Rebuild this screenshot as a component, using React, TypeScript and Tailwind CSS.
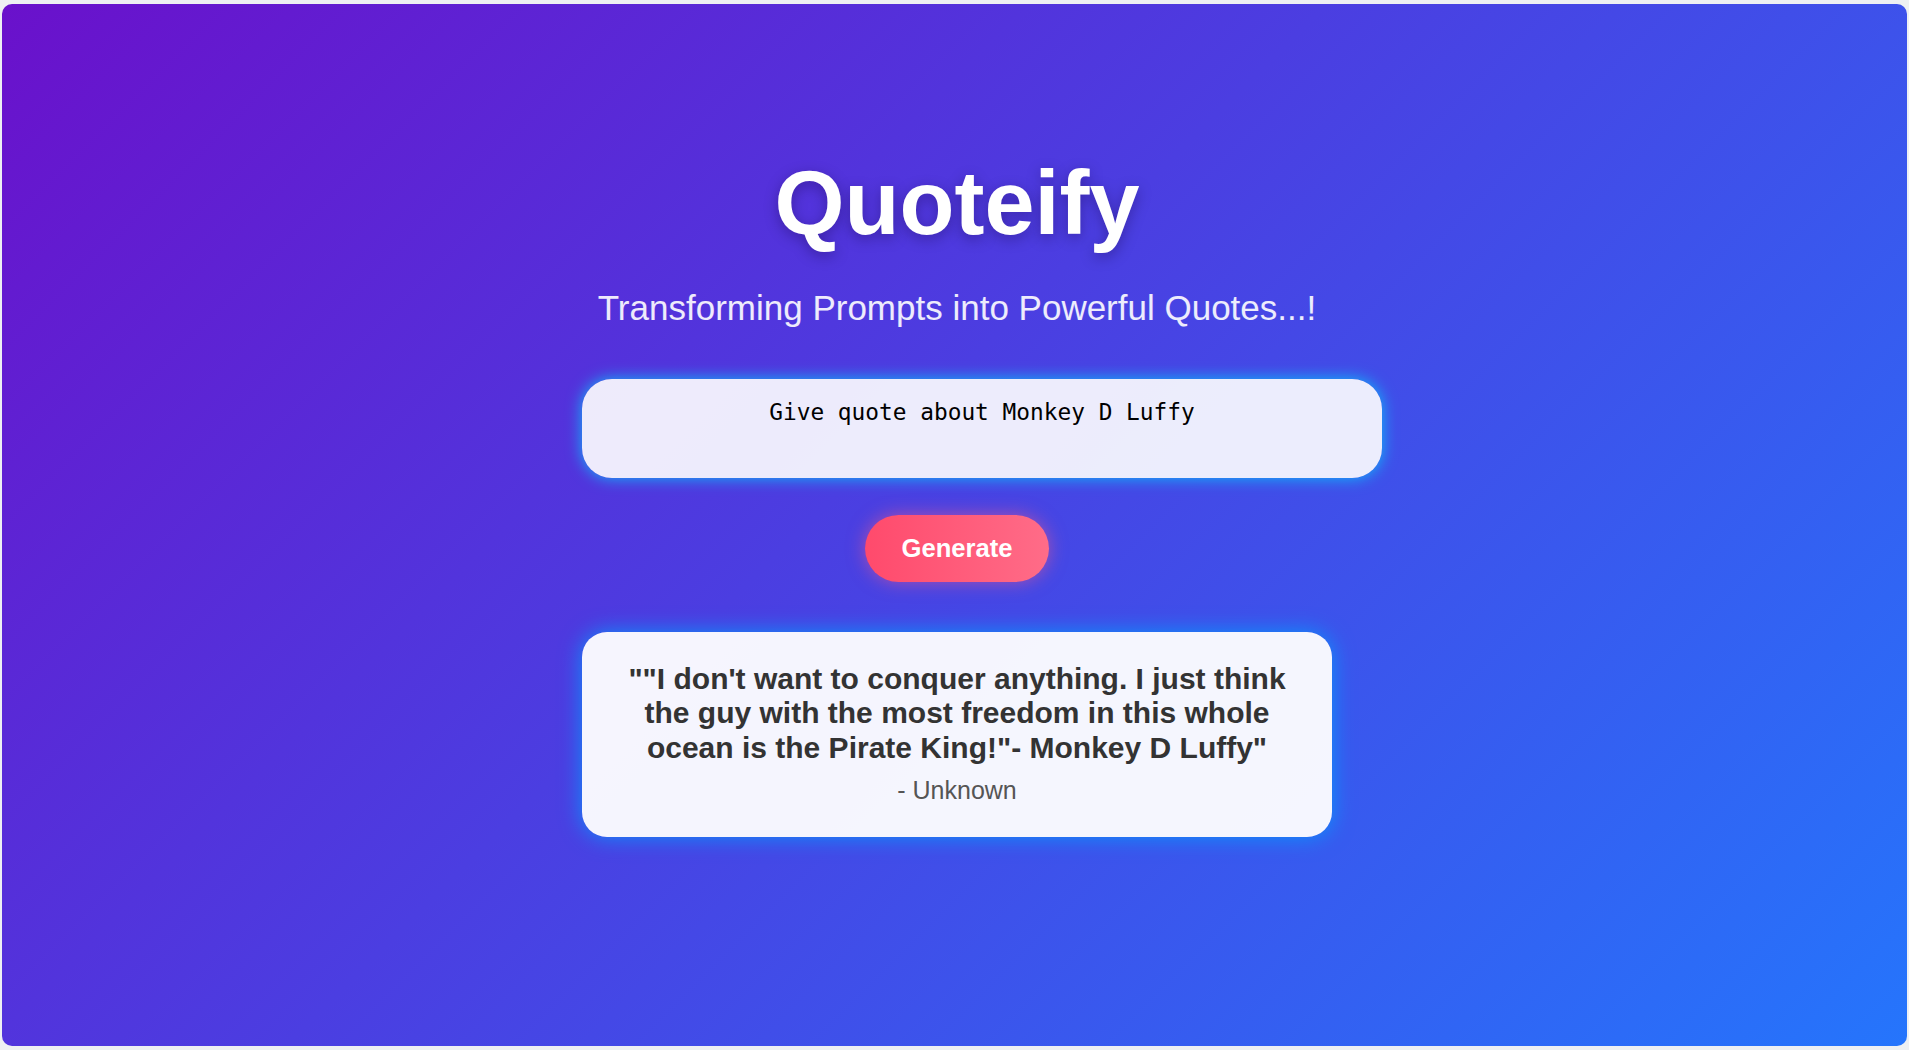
import { useState } from "react";

const QUOTE =
  "\"\"I don't want to conquer anything. I just think the guy with the most freedom in this whole ocean is the Pirate King!\"- Monkey D Luffy\"";

export default function App() {
  const [prompt, setPrompt] = useState("Give quote about Monkey D Luffy");

  return (
    <div className="h-screen bg-[#eef0f3] px-[2px] py-[4px] font-['Liberation_Sans',Arial,sans-serif]">
      <div className="flex h-full flex-col items-center rounded-[10px] bg-[linear-gradient(135deg,#6a11cb_0%,#2575fc_100%)] pl-[5px] pt-[148px]">
        <h1 className="text-[90px] font-bold leading-[1.15] text-white [text-shadow:0_4px_14px_rgba(20,0,60,0.35)]">
          Quoteify
        </h1>
        <p className="mt-[32px] text-[35px] leading-[1.15] text-white/90">
          Transforming Prompts into Powerful Quotes...!
        </p>

        <div className="mt-[51px] flex w-[750px] flex-col items-start">
          <textarea
            value={prompt}
            onChange={(e) => setPrompt(e.target.value)}
            className="h-[99px] w-[800px] resize-none rounded-[30px] bg-white/90 px-[25px] pt-[20px] text-center font-['DejaVu_Sans_Mono',monospace] text-[22.8px] leading-[1.17] text-black shadow-[0_0_16px_rgba(0,210,255,0.85)] outline-none"
          />
        </div>

        <button className="mt-[37px] h-[67px] w-[184px] rounded-full bg-[linear-gradient(90deg,#ff4a6c,#ff6c88)] text-[25.6px] font-bold text-white shadow-[0_0_18px_rgba(255,90,130,0.55)]">
          Generate
        </button>

        <div className="mt-[50px] w-[750px] rounded-[25px] bg-white/95 px-[30px] pb-[32px] pt-[30px] text-center shadow-[0_0_22px_rgba(0,160,255,0.85)]">
          <p className="text-[30px] font-bold leading-[1.15] text-[#333]">{QUOTE}</p>
          <p className="mt-[11px] text-[25px] leading-[1.15] text-[#555]">- Unknown</p>
        </div>
      </div>
    </div>
  );
}
